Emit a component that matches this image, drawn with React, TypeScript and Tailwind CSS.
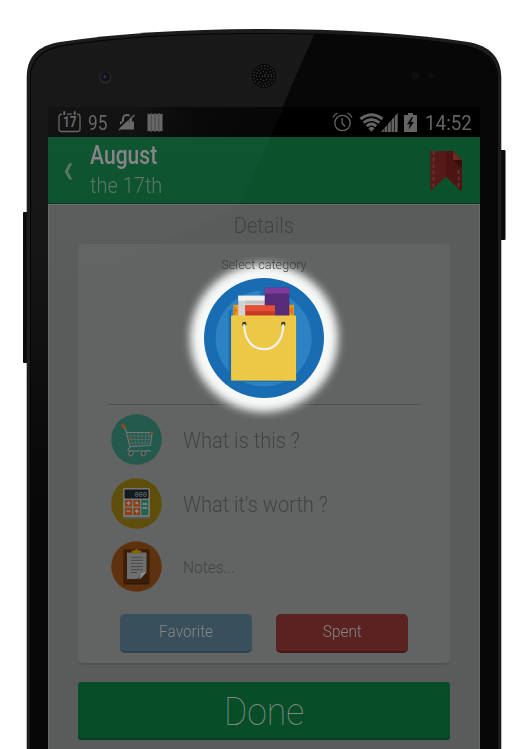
import React from "react";

function PhoneShell() {
  return (
    <svg className="absolute inset-0" width="528" height="749" viewBox="0 0 528 749">
      <defs>
        <linearGradient id="face" x1="0" y1="0" x2="0" y2="1">
          <stop offset="0" stopColor="#191919" />
          <stop offset=".3" stopColor="#161616" />
          <stop offset=".6" stopColor="#090909" />
          <stop offset="1" stopColor="#070707" />
        </linearGradient>
        <clipPath id="faceClip">
          <path d="M31 749V78C31 60 42 50 64 46C122 37 192 34 264 34C338 34 406 38 464 47C486 51 497 61 497 78V749Z" />
        </clipPath>
      </defs>
      <rect x="23" y="212" width="6" height="151" rx="1" fill="#0b0b0b" />
      <rect x="499" y="150" width="6.5" height="90" rx="1" fill="#0b0b0b" />
      <path d="M26.7 749V78C26.7 57 37 46 60 42C120 33 190 29 264 29C340 29 408 33 468 42C490 46 501 57 501.3 78V749Z" fill="#1c1c1c" />
      <path d="M30 749V78C30 60 41 49 63 45C122 36 192 33 264 33C338 33 406 36 465 45C487 50 498 61 498 78V749Z" fill="#050505" />
      <g clipPath="url(#faceClip)">
        <rect x="26" y="30" width="476" height="719" fill="url(#face)" />
        <path d="M316 30L240 204H480V749H502V30Z" fill="#070707" />
      </g>
      <circle cx="105.3" cy="77.5" r="6" fill="#2a2a2a" />
      <circle cx="105.3" cy="76.8" r="4.8" fill="#121214" />
      <circle cx="105" cy="77" r="2" fill="#19194a" />
      <circle cx="104.5" cy="76.5" r=".8" fill="#4a4a80" />
      <circle cx="264" cy="76" r="12" fill="#070707" />
      <g fill="none" stroke="#333" strokeWidth="1.4" strokeDasharray="1.5 1.7">
        <circle cx="264" cy="76" r="1.5" />
        <circle cx="264" cy="76" r="4.5" />
        <circle cx="264" cy="76" r="7.5" />
        <circle cx="264" cy="76" r="10.3" />
      </g>
      <circle cx="415.5" cy="75.5" r="4" fill="#0e0e0e" />
      <circle cx="431" cy="75.5" r="3" fill="#0e0e0e" />
    </svg>
  );
}

function StatusBar() {
  return (
    <div className="flex h-[30px] shrink-0 items-center bg-[#010101] bg-linear-to-r from-[#0c0c0c] from-20% to-[#000] to-58% text-[#646464]">
      <svg className="ml-[10px]" width="23" height="22" viewBox="0 0 23 22" fill="none" stroke="currentColor" strokeWidth="1.3">
        <path d="M4 3.2H3.5Q1 3.5 1 6V18Q1 20.5 3.5 20.5H19.5Q22 20.5 22 18V6Q22 3.5 19.5 3.2H19M9 3.2H14" />
        <path d="M6.3 .3V4M16.7 .3V4" strokeWidth="2" />
        <text x="5" y="16.4" textLength="13.5" lengthAdjust="spacingAndGlyphs" fontFamily="Roboto" fontWeight="700" fontSize="15" fill="currentColor" stroke="none">17</text>
      </svg>
      <span className="ml-[7px] mt-[1px] w-[20px] whitespace-nowrap text-[20px] leading-none"><span className="inline-block origin-left scale-x-[.86]">95</span></span>
      <svg className="ml-[10px]" width="18" height="18" viewBox="0 0 18 18">
        <path d="M2 8.5H16V16.5H2Z" fill="currentColor" />
        <path d="M5 9V6A4 4 0 0 1 13 6V9" fill="none" stroke="currentColor" strokeWidth="2" />
        <path d="M0 15.2L16 .2" stroke="#0b0b0b" strokeWidth="2.2" />
        <path d="M1 17L16.5 2" stroke="currentColor" strokeWidth="1.3" />
      </svg>
      <svg className="ml-[11px]" width="16" height="19" viewBox="0 0 16 19">
        <path d="M.5 .5L2 1.3L4 .3L6 1.3L8 .3L10 1.3L12 .3L14 1.3L15.5 .5V18.5L14 17.7L12 18.7L10 17.7L8 18.7L6 17.7L4 18.7L2 17.7L.5 18.5Z" fill="currentColor" />
        <path d="M4.2 1V18M8 1V18M11.8 1V18" stroke="#383838" strokeWidth=".8" />
      </svg>
      <div className="ml-auto mr-[8px] flex items-center">
        <svg width="21" height="20" viewBox="0 0 21 20" fill="none" stroke="currentColor" strokeWidth="1.3">
          <circle cx="10.5" cy="11" r="7.7" />
          <path d="M10.2 6V11.3L13 14.5M1 5.5Q2.5 2.5 5.5 1M20 5.5Q18.5 2.5 15.5 1" />
        </svg>
        <svg className="ml-[6px]" width="25" height="19" viewBox="0 0 25 19" fill="none" stroke="currentColor" strokeWidth="2.9">
          <path d="M1.5 6Q12.5 -2.5 23.5 6M4.6 9.6Q12.5 3.2 20.4 9.6M7.7 13.1Q12.5 9 17.3 13.1" />
          <path d="M9.3 15.2Q12.5 12.6 15.7 15.2L12.5 18.8Z" fill="currentColor" stroke="none" />
        </svg>
        <svg className="-ml-[3px]" width="17" height="19" viewBox="0 0 17 19" fill="currentColor">
          <path d="M0 19L2.8 15.8V19ZM3.5 15L6.3 11.8V19H3.5ZM7 11L9.8 7.8V19H7ZM10.5 7L13.3 3.8V19H10.5ZM14 3L16.7 0V19H14Z" />
        </svg>
        <svg className="ml-[6px]" width="13" height="19" viewBox="0 0 13 19">
          <path d="M4 0H9V2H13V19H0V2H4Z" fill="currentColor" />
          <path d="M7.8 4L3 11.2H5.8L4.5 16.5L10 9H7L9 4Z" fill="#050505" />
        </svg>
        <span className="ml-[8px] mt-[1px] w-[47px] whitespace-nowrap text-[20px] leading-none"><span className="inline-block origin-left scale-x-[.94]">14:52</span></span>
      </div>
    </div>
  );
}

function Header() {
  return (
    <header className="flex h-[67px] shrink-0 items-start border-b border-[#07391f] bg-[#0a512c]">
      <svg className="ml-[16px] mt-[26px]" width="9" height="17" viewBox="0 0 9 17">
        <path d="M5.2 .3H8.2L4 8.5L8.2 16.5H5.2L.7 8.5Z" fill="#597465" />
      </svg>
      <div className="ml-[17px] mt-[5px] whitespace-nowrap">
        <div className="h-[29px] text-[25px] leading-[28px] text-[#858187]"><span className="inline-block origin-left scale-x-[.845] font-medium">August</span></div>
        <div className="text-[22px] font-light leading-[30px] text-[#597465]"><span className="inline-block origin-left scale-x-[.91]">the 17th</span></div>
      </div>
      <svg className="ml-auto mr-[18px] mt-[14px]" width="32" height="41" viewBox="0 0 32 41">
        <path d="M.3 0H23L31.7 9V40.5L16 25.5L.3 40.5Z" fill="#561a19" />
        <path d="M16 0H23L31.7 9V40.5L16 25.5Z" fill="#4c1413" />
        <path d="M23 9H31.7V17Z" fill="#380d0c" />
        <path d="M23 0L31.7 9H23Z" fill="#6c2a27" />
        <path d="M3.5 0V38M28.5 19V37" stroke="#623130" strokeWidth="2" strokeDasharray="4 2.5" />
      </svg>
    </header>
  );
}

function ShoppingBag() {
  return (
    <svg className="relative" width="120" height="120" viewBox="204 278.3 120 120">
      <circle cx="264" cy="338.3" r="60" fill="#176cb2" />
      <circle cx="263.7" cy="338.7" r="48" fill="#2c82c3" />
      <path d="M231.3 309L228.5 312V372Q234 379 240 382H297V378.5H231.3Z" fill="#176cb2" />
      <path d="M264.7 291H260.5V297H264.7Z" fill="#176cb2" />
      <path d="M233.3 305H294V317H233.3Z" fill="#ef9822" />
      <path d="M234 306L237.5 311L234 316M293 306L289.5 311L293 316" fill="#d97913" />
      <path d="M238.3 296H265V317H238.3Z" fill="#d2d3d5" />
      <path d="M238.3 296H265V301H238.3Z" fill="#f2f2f3" />
      <path d="M245 301H265V304H245Z" fill="#c1c2c5" />
      <path d="M264.7 288H289.4V317H264.7Z" fill="#562b78" />
      <path d="M264.7 288H289.4V294H264.7Z" fill="#7c3b99" />
      <path d="M245.2 305.7H275V317H245.2Z" fill="#c23a2c" />
      <path d="M245.2 305.7H275V311.5H245.2Z" fill="#e64e34" />
      <path d="M231.3 316H296V380.7H231.3Z" fill="#edc746" />
      <path d="M231.7 380V316.4H295.6V380.3Z" fill="none" stroke="#f7d12d" strokeWidth=".8" />
      <circle cx="244.3" cy="324.2" r="2.2" fill="#373738" />
      <circle cx="283.3" cy="324.2" r="2.2" fill="#373738" />
      <path d="M244.3 324.5C244.3 340 252 349.5 263.8 349.5C275.5 349.5 283.3 340 283.3 324.5" fill="none" stroke="#f1f1ee" strokeWidth="2.2" />
    </svg>
  );
}

function CartIcon() {
  return (
    <svg width="51" height="51" viewBox="0 0 51 51" fill="none">
      <circle cx="25.5" cy="25.5" r="25.3" fill="#24594d" />
      <path d="M12 12L14.5 15L19 32.5Q20 34 17.5 34.5Q16 36.5 18 37H36Q38 35.5 39.5 38M15 18.5H41L39.3 31.5L19 32.5" stroke="#6d7975" strokeWidth="1.2" />
      <path d="M19 19L22 32M23 19L25 32M27 19L28 32M31 19V32M35 19L34 32M38 19L36.5 32M16 22H40M17 25.5H39.5M18 29H39" stroke="#577068" strokeWidth=".8" />
      <path d="M10.8 10.5L14.2 13.8" stroke="#994617" strokeWidth="3" />
      <circle cx="40.5" cy="18.5" r="1.3" fill="#994617" /><circle cx="18" cy="24.5" r="1.3" fill="#994617" />
      <ellipse cx="20" cy="39.3" rx="1.9" ry="2.6" transform="rotate(30 20 39.3)" fill="#40413f" stroke="#6f7471" />
      <ellipse cx="32.5" cy="39.3" rx="1.9" ry="2.6" transform="rotate(30 32.5 39.3)" fill="#40413f" stroke="#6f7471" />
    </svg>
  );
}

function CalculatorIcon() {
  return (
    <svg width="51" height="51" viewBox="0 0 51 51">
      <circle cx="25.5" cy="25.5" r="25.3" fill="#5f4e0a" />
      <rect x="12" y="10" width="27" height="31" rx="1.5" fill="#555756" />
      <rect x="12" y="10" width="27" height="29" rx="1.5" fill="#737675" />
      <rect x="13.5" y="11.5" width="24" height="9" rx="1" fill="#141a1f" />
      <text x="36" y="18.6" textAnchor="end" fontFamily="Liberation Mono" fontSize="7" fill="#737a7d">000</text>
      <path d="M14 22H21V28.5H14ZM22.4 22H29V28.5H22.4ZM14 30H21V37H14ZM22.4 30H29V37H22.4Z" fill="#8c3e13" />
      <rect x="30.3" y="22" width="7" height="15" fill="#246353" />
      <path d="M15.5 25.2H19.5M17.5 23.2V27.2M15.5 33.2H19.5M23.7 33.2H27.7M25.7 31.2V35.2M31.3 26H36.3M31.3 30H36.3" stroke="#8e8b87" strokeWidth="1.3" />
      <rect x="24.5" y="23.7" width="2.6" height="2.6" fill="#8e8b87" />
    </svg>
  );
}

function ClipboardIcon() {
  return (
    <svg width="51" height="51" viewBox="0 0 51 51">
      <circle cx="25.5" cy="25.5" r="25.3" fill="#5f320f" />
      <rect x="12.7" y="8.5" width="25.6" height="35" rx="1" fill="#301805" />
      <rect x="12.7" y="8.5" width="25.6" height="33.5" rx="1" fill="#3b1d08" />
      <path d="M16 11.5H35.5V31L29 38H16Z" fill="#6d6e6d" />
      <path d="M25 38L35.5 31L29 38Z" fill="#525352" />
      <path d="M29 38L30 32L35.5 31Z" fill="#8a8b8a" />
      <path d="M20 16.3H31.7M20 19.4H31.7M20 22.5H31.7M20 25.6H31.7M20 28.7H31.7M20 31.5H26" stroke="#494a49" />
      <path d="M20.7 9.5H23Q25.5 6.5 28 9.5H30.3V12.5H20.7Z" fill="#81630a" />
    </svg>
  );
}

function FieldRow({ icon, label, small = false }: { icon: React.ReactNode; label: string; small?: boolean }) {
  return (
    <div className="flex h-[51px] items-center whitespace-nowrap text-[#414443]">
      {icon}
      <span className={small ? "ml-[21px] mt-[3px] text-[17px] font-light" : "ml-[21px] mt-[2px] text-[22px] font-light"}>
        <span className="inline-block origin-left scale-x-[.912]">{label}</span>
      </span>
    </div>
  );
}

function Card() {
  return (
    <section className="mx-[30px] mt-[7px] flex h-[421px] flex-col rounded-[5px] border-b-2 border-[#515352] bg-[#626463]">
      <div className="mx-[30px] flex h-[161px] flex-col items-center border-b border-[#4f5150]">
        <div className="relative z-10 mt-[13px] h-[21px] text-[13px] font-light leading-[16px] text-[#3a3c3b]"><span className="inline-block scale-x-[.97]">Select category</span></div>
        <div className="relative h-[120px] w-[120px]">
          <div className="absolute -left-[14px] -top-[14px] h-[148px] w-[148px] rounded-full bg-[#f7f9f9] blur-[4px]" />
          <ShoppingBag />
        </div>
      </div>
      <div className="ml-[33px] mt-[9px] flex flex-col gap-[12.5px]">
        <FieldRow icon={<CartIcon />} label="What is this ?" />
        <FieldRow icon={<CalculatorIcon />} label="What it's worth ?" />
        <FieldRow icon={<ClipboardIcon />} label="Notes..." small />
      </div>
      <div className="ml-[42px] mt-[21.5px] flex gap-[24px] text-[16px] font-light text-[#858687]">
        <button className="h-[39px] w-[132px] rounded-[5px] border-b-2 border-[#2d424f] bg-[#394f5c]"><span className="inline-block scale-x-[.96]">Favorite</span></button>
        <button className="h-[39px] w-[132px] rounded-[5px] border-b-2 border-[#451615] bg-[#5a2321]"><span className="inline-block scale-x-[.96]">Spent</span></button>
      </div>
    </section>
  );
}

export default function App() {
  return (
    <main className="relative flex h-[749px] w-[528px] flex-col overflow-hidden bg-white font-['Roboto',sans-serif]">
      <PhoneShell />
      <div className="relative ml-[48px] mt-[107px] flex w-[432px] flex-1 flex-col bg-[#5a5c5b]">
        <StatusBar />
        <Header />
        <div className="flex flex-1 flex-col border-x border-t border-[#686a69]">
          <h1 className="mt-[5px] h-[27px] text-center text-[22px] font-light leading-[32px] text-[#414342]"><span className="inline-block scale-x-[.92]">Details</span></h1>
          <div className="-mx-px"><Card /></div>
          <button className="mx-[29px] mt-[17px] h-[58px] rounded-[3px] border-b-2 border-[#063f21] bg-[#074d28] text-[39px] font-thin leading-[56px] text-[#818985]"><span className="inline-block translate-y-[2px] scale-x-[.91]">Done</span></button>
        </div>
      </div>
      <svg className="pointer-events-none absolute inset-0" width="528" height="749" viewBox="0 0 528 749">
        <defs>
          <linearGradient id="glare" x1="0" y1="107" x2="0" y2="300" gradientUnits="userSpaceOnUse">
            <stop offset="0" stopColor="#fff" stopOpacity=".03" />
            <stop offset=".5" stopColor="#fff" stopOpacity=".015" />
            <stop offset="1" stopColor="#fff" stopOpacity="0" />
          </linearGradient>
        </defs>
        <path d="M48 107H284L240 204L48 300Z" fill="url(#glare)" />
      </svg>
    </main>
  );
}
